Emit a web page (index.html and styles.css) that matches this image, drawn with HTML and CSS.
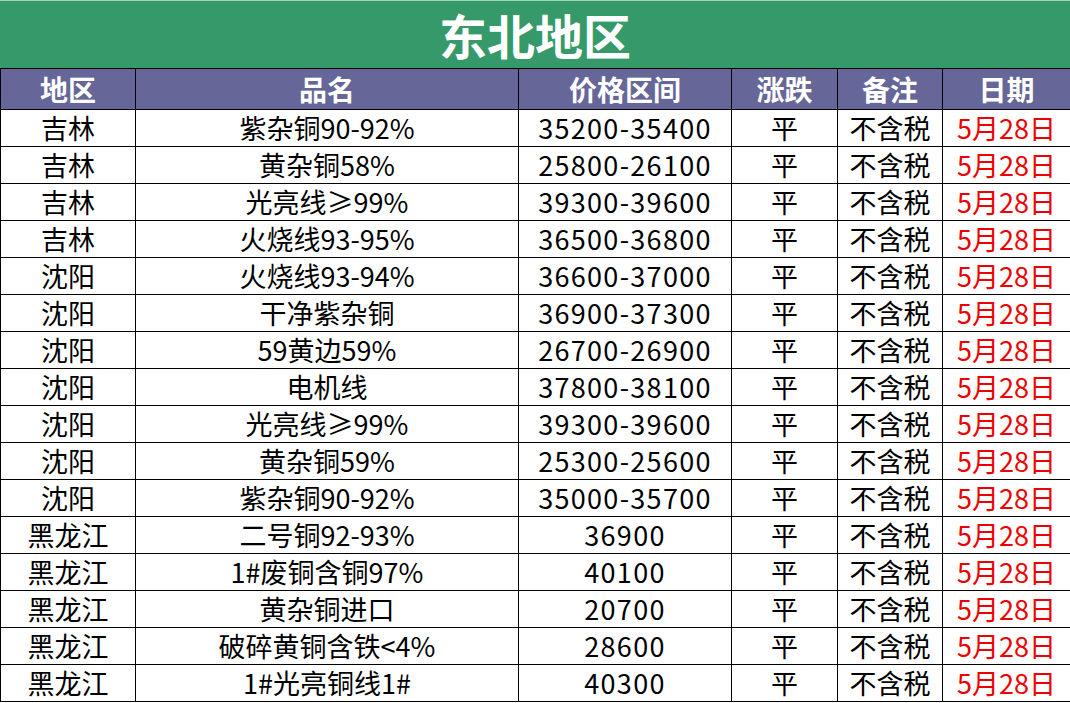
FILE: index.html
```html
<!DOCTYPE html>
<html lang="zh">
<head>
<meta charset="utf-8">
<link rel="stylesheet" href="styles.css">
</head>
<body>
<div class="sheet">
  <div class="title">东北地区</div>
  <table class="grid">
    <colgroup>
      <col class="c1"><col class="c2"><col class="c3"><col class="c4"><col class="c5"><col class="c6">
    </colgroup>
    <thead>
      <tr><th>地区</th><th>品名</th><th>价格区间</th><th>涨跌</th><th>备注</th><th>日期</th></tr>
    </thead>
    <tbody>
      <tr><td>吉林</td><td>紫杂铜90-92%</td><td>35200-35400</td><td>平</td><td>不含税</td><td class="date">5月28日</td></tr>
      <tr><td>吉林</td><td>黄杂铜58%</td><td>25800-26100</td><td>平</td><td>不含税</td><td class="date">5月28日</td></tr>
      <tr><td>吉林</td><td>光亮线≥99%</td><td>39300-39600</td><td>平</td><td>不含税</td><td class="date">5月28日</td></tr>
      <tr><td>吉林</td><td>火烧线93-95%</td><td>36500-36800</td><td>平</td><td>不含税</td><td class="date">5月28日</td></tr>
      <tr><td>沈阳</td><td>火烧线93-94%</td><td>36600-37000</td><td>平</td><td>不含税</td><td class="date">5月28日</td></tr>
      <tr><td>沈阳</td><td>干净紫杂铜</td><td>36900-37300</td><td>平</td><td>不含税</td><td class="date">5月28日</td></tr>
      <tr><td>沈阳</td><td>59黄边59%</td><td>26700-26900</td><td>平</td><td>不含税</td><td class="date">5月28日</td></tr>
      <tr><td>沈阳</td><td>电机线</td><td>37800-38100</td><td>平</td><td>不含税</td><td class="date">5月28日</td></tr>
      <tr><td>沈阳</td><td>光亮线≥99%</td><td>39300-39600</td><td>平</td><td>不含税</td><td class="date">5月28日</td></tr>
      <tr><td>沈阳</td><td>黄杂铜59%</td><td>25300-25600</td><td>平</td><td>不含税</td><td class="date">5月28日</td></tr>
      <tr><td>沈阳</td><td>紫杂铜90-92%</td><td>35000-35700</td><td>平</td><td>不含税</td><td class="date">5月28日</td></tr>
      <tr><td>黑龙江</td><td>二号铜92-93%</td><td>36900</td><td>平</td><td>不含税</td><td class="date">5月28日</td></tr>
      <tr><td>黑龙江</td><td>1#废铜含铜97%</td><td>40100</td><td>平</td><td>不含税</td><td class="date">5月28日</td></tr>
      <tr><td>黑龙江</td><td>黄杂铜进口</td><td>20700</td><td>平</td><td>不含税</td><td class="date">5月28日</td></tr>
      <tr><td>黑龙江</td><td>破碎黄铜含铁&lt;4%</td><td>28600</td><td>平</td><td>不含税</td><td class="date">5月28日</td></tr>
      <tr><td>黑龙江</td><td>1#光亮铜线1#</td><td>40300</td><td>平</td><td>不含税</td><td class="date">5月28日</td></tr>
    </tbody>
  </table>
</div>
</body>
</html>
```

FILE: styles.css
```css
html, body {
  margin: 0;
  padding: 0;
  background: #ffffff;
}

.sheet {
  width: 1070px;
  font-family: "Noto Sans CJK SC", "Noto Sans", sans-serif;
}

.title {
  height: 68px;
  background: #35996a;
  border-top: 1px solid #9fd3b8;
  box-sizing: border-box;
  color: #ffffff;
  font-size: 48px;
  font-weight: 700;
  line-height: 66px;
  text-align: center;
}

.grid {
  width: 1070px;
  table-layout: fixed;
  border-collapse: collapse;
  border-right: 1px solid #000;
}

.c1 { width: 135px; }
.c2 { width: 383px; }
.c3 { width: 213px; }
.c4 { width: 106px; }
.c5 { width: 105px; }
.c6 { width: 128px; }

.grid th,
.grid td {
  border: 1px solid #000;
  padding: 0;
  text-align: center;
  white-space: nowrap;
  overflow: hidden;
}

.grid th {
  height: 40px;
  background: #666699;
  color: #ffffff;
  font-size: 28px;
  font-weight: 700;
  line-height: 40px;
}

.grid td {
  height: 36px;
  color: #000;
  font-size: 27px;
  line-height: 36px;
}

.grid td:nth-child(3) {
  letter-spacing: 1.3px;
}

.grid td.date {
  color: #ee0000;
}
```
